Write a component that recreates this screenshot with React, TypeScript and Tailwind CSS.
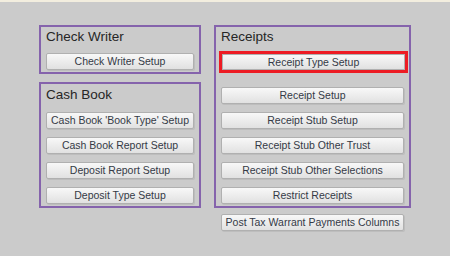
const font = { fontFamily: '"Liberation Sans", Arial, sans-serif' };

function Btn({ label }: { label: string }) {
  return (
    <div className="h-[17px] flex items-center justify-center rounded-[2px] border border-[#b0b0b0] bg-gradient-to-b from-[#f8f8f8] to-[#e1e1e1] shadow-[1px_1px_0_#bdbdbd] text-[10.5px] leading-none text-[#343a46] whitespace-nowrap">
      {label}
    </div>
  );
}

function Heading({ children }: { children: string }) {
  return <div className="text-[13.5px] leading-[16px] text-[#262626]">{children}</div>;
}

export default function App() {
  return (
    <div className="w-[450px] h-[256px] bg-[#cbcbcb] border-t-2 border-[#f3eedf]" style={font}>
      <div className="flex justify-center gap-[13px] pt-[23px]">
        {/* left column */}
        <div className="flex flex-col gap-[8px] w-[162px]">
          <div className="border-2 border-[#8563ac] px-[5px] pt-[2px] pb-[2px]">
            <Heading>Check Writer</Heading>
            <div className="mt-[8px]">
              <Btn label="Check Writer Setup" />
            </div>
          </div>
          <div className="border-2 border-[#8563ac] px-[5px] pt-[3px] pb-[2px]">
            <Heading>Cash Book</Heading>
            <div className="mt-[9px] flex flex-col gap-[8px]">
              <Btn label="Cash Book 'Book Type' Setup" />
              <Btn label="Cash Book Report Setup" />
              <Btn label="Deposit Report Setup" />
              <Btn label="Deposit Type Setup" />
            </div>
          </div>
        </div>

        {/* right column */}
        <div className="flex flex-col w-[197px]">
          <div className="border-2 border-[#8563ac] px-[5px] pt-[2px] pb-[2px]">
            <Heading>Receipts</Heading>
            <div className="mt-[6px] ml-[-2px] w-[189px] h-[22px] border-[3px] border-[#ed1c24] bg-[#ed1c24]">
              <div className="h-full flex items-center justify-center border border-[#b0b0b0] bg-gradient-to-b from-[#f8f8f8] to-[#e1e1e1] text-[10.5px] leading-none text-[#343a46]">
                Receipt Type Setup
              </div>
            </div>
            <div className="mt-[14px] flex flex-col gap-[8px]">
              <Btn label="Receipt Setup" />
              <Btn label="Receipt Stub Setup" />
              <Btn label="Receipt Stub Other Trust" />
              <Btn label="Receipt Stub Other Selections" />
              <Btn label="Restrict Receipts" />
            </div>
          </div>
          <div className="mt-[6px] px-[7px]">
            <Btn label="Post Tax Warrant Payments Columns" />
          </div>
        </div>
      </div>
    </div>
  );
}
